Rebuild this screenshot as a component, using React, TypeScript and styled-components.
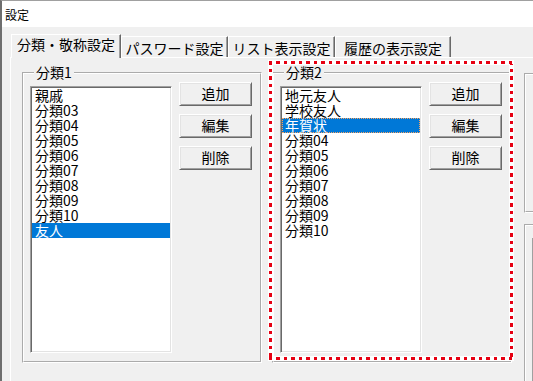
import React from 'react';
import styled, { createGlobalStyle } from 'styled-components';

const GlobalStyle = createGlobalStyle`
  html, body {
    margin: 0;
    padding: 0;
    background: #f0f0f0;
  }
  body {
    font-family: "Noto Sans CJK JP", "Noto Sans", sans-serif;
    color: #000;
  }
`

const list1 = ['親戚', '分類03', '分類04', '分類05', '分類06', '分類07', '分類08', '分類09', '分類10', '友人']
const list2 = ['地元友人', '学校友人', '年賀状', '分類04', '分類05', '分類06', '分類07', '分類08', '分類09', '分類10']

const tabs = [
  { label: '分類・敬称設定', w: 110 },
  { label: 'パスワード設定', w: 107 },
  { label: 'リスト表示設定', w: 107 },
  { label: '履歴の表示設定', w: 116 },
]

function CategoryGroup({ title, items, selected, focused }) {
  return (
    <Group>
      <Legend>{title}</Legend>
      <GroupBody>
        <ListBox>
          {items.map((it, i) => (
            <Item key={i} $selected={i === selected} $focus={focused && i === selected}>{it}</Item>
          ))}
        </ListBox>
        <ButtonCol>
          <Button>追加</Button>
          <Button>編集</Button>
          <Button>削除</Button>
        </ButtonCol>
      </GroupBody>
    </Group>
  )
}

function App() {
  return (
    <>
      <GlobalStyle />
      <Window>
        <TitleBar>設定</TitleBar>
        <Body>
          <TabStrip>
            {tabs.map((t, i) => (
              <Tab key={i} $w={t.w} $active={i === 0}>{t.label}</Tab>
            ))}
          </TabStrip>
          <Panel>
            <CategoryGroup title="分類1" items={list1} selected={9} focused={false} />
            <HighlightWrap>
              <CategoryGroup title="分類2" items={list2} selected={2} focused={true} />
              <Highlight />
            </HighlightWrap>
            <SideCol>
              <SideBox $h={140} />
              <SideBox $h={160}>
                <SideList />
              </SideBox>
            </SideCol>
          </Panel>
        </Body>
      </Window>
    </>
  )
}


const Window = styled.div`
  width: 533px;
  height: 381px;
  box-sizing: border-box;
  border-left: 2px solid #6e6e6e;
  border-top: 1px solid #a0a0a0;
  background: #f0f0f0;
  overflow: hidden;
`

const TitleBar = styled.div`
  height: 26px;
  background: #fff;
  display: flex;
  align-items: center;
  padding-left: 3px;
  font-size: 12px;
`

const Body = styled.div`
  padding: 7px 0 0 8px;
`

const TabStrip = styled.div`
  display: flex;
  align-items: flex-end;
  height: 23px;
  padding-left: 1px;
  position: relative;
  z-index: 1;
`

const Tab = styled.div`
  box-sizing: border-box;
  width: ${p => p.$w}px;
  height: ${p => (p.$active ? 24 : 21)}px;
  margin-bottom: ${p => (p.$active ? -1 : 0)}px;
  padding-top: ${p => (p.$active ? 2 : 4)}px;
  border-top: 1px solid #fff;
  border-left: 1px solid #fff;
  border-right: 1px solid #696969;
  box-shadow: inset -1px 0 #a0a0a0;
  background: #f0f0f0;
  font-size: 14px;
  line-height: 15px;
  text-align: center;
  white-space: nowrap;
`

const Panel = styled.div`
  display: flex;
  align-items: flex-start;
  gap: 10px;
  height: 340px;
  padding: 7px 0 0 11px;
  border-top: 1px solid #fff;
  border-left: 1px solid #fff;
`

const Group = styled.fieldset`
  box-sizing: border-box;
  flex: none;
  width: 240px;
  height: 298px;
  margin: 0;
  padding: 0 0 0 6px;
  min-inline-size: 0;
  border: 2px groove #fff;
`

const Legend = styled.legend`
  margin-left: 4px;
  padding: 0 2px;
  font-size: 14px;
  line-height: 15px;
`

const GroupBody = styled.div`
  display: flex;
  align-items: flex-start;
  gap: 7px;
  padding-top: 2px;
`

const ListBox = styled.div`
  box-sizing: border-box;
  width: 142px;
  height: 267px;
  margin-top: 4px;
  background: #fff;
  border: 1px solid;
  border-color: #a0a0a0 #fff #fff #a0a0a0;
  box-shadow: inset 1px 1px #696969, inset -1px -1px #e3e3e3;
  padding: 1px 1px 0 1px;
  overflow: hidden;
`

const Item = styled.div`
  height: 15px;
  padding-left: 3px;
  font-size: 14px;
  line-height: 15px;
  white-space: nowrap;
  background: ${p => (p.$selected ? '#0078d7' : 'transparent')};
  color: ${p => (p.$selected ? '#fff' : '#000')};
  outline: ${p => (p.$focus ? '1px dotted #f7a463' : 'none')};
  outline-offset: -1px;
`

const ButtonCol = styled.div`
  display: flex;
  flex-direction: column;
  gap: 8px;
`

const Button = styled.div`
  box-sizing: border-box;
  width: 73px;
  height: 24px;
  background: #f0f0f0;
  border: 1px solid;
  border-color: #fff #696969 #696969 #fff;
  box-shadow: inset 1px 1px #e3e3e3, inset -1px -1px #a0a0a0;
  font-size: 14px;
  line-height: 21px;
  text-align: center;
`

const HighlightWrap = styled.div`
  position: relative;
  flex: none;
`

const dash = (dir: string) =>
  `repeating-linear-gradient(${dir}, #e60012 0 3.5px, #fff 3.5px 7.5px)`

const Highlight = styled.div`
  position: absolute;
  left: -4px;
  top: -5px;
  right: -2px;
  bottom: 2px;
  border: 1px solid #fff;
  pointer-events: none;
  background:
    ${dash('90deg')} top left / 100% 3px no-repeat,
    ${dash('90deg')} bottom left / 100% 3px no-repeat,
    ${dash('180deg')} top left / 3px 100% no-repeat,
    ${dash('180deg')} top right / 3px 100% no-repeat;

  &::after {
    content: '';
    position: absolute;
    inset: 3px;
    border: 1px solid #fff;
  }
`

const SideCol = styled.div`
  flex: none;
  display: flex;
  flex-direction: column;
  gap: 11px;
  margin-top: 8px;
  margin-left: 2px;
`

const SideBox = styled.div`
  box-sizing: border-box;
  width: 120px;
  height: ${p => p.$h}px;
  border: 2px groove #fff;
  padding: 12px 0 0 6px;
`

const SideList = styled.div`
  height: 200px;
  background: #fff;
  border-left: 1px solid #a0a0a0;
  box-shadow: inset 1px 1px #696969;
`


export default App
